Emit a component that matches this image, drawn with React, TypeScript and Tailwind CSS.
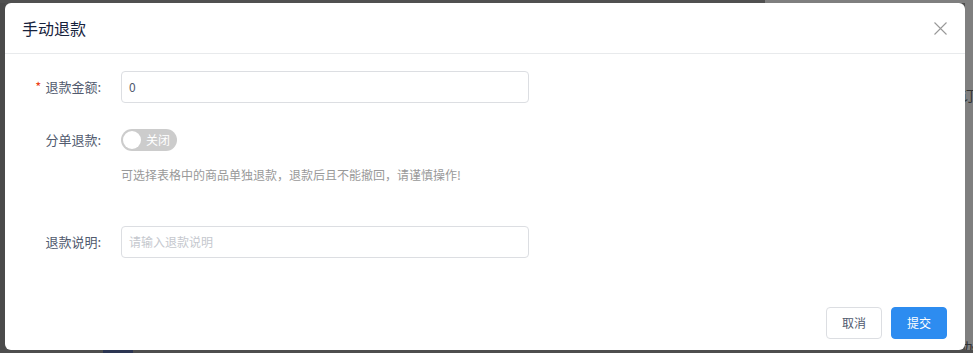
import React from "react";

const font = { fontFamily: '"Noto Sans CJK SC", "Noto Sans", sans-serif' };

export default function App() {
  return (
    <div
      className="w-[973px] h-[353px] overflow-hidden bg-[#4e4e4e] flex flex-col"
      style={font}
    >
      <div className="h-[3px] flex shrink-0">
        <div className="w-[765px] bg-[#505050]" />
        <div className="flex-1 bg-[#7f7f7f]" />
      </div>
      <div className="flex h-[347px] shrink-0">
        <div className="w-[5px] bg-[#4a4a4a]" />
        <div className="w-[960px] bg-white rounded-[6px] flex flex-col">
          {/* header */}
          <div className="h-[51px] border-b border-[#e8eaec] flex items-center justify-between pl-[17px] pr-[18px] shrink-0">
            <span className="text-[16px] text-[#17233d] leading-none">手动退款</span>
            <svg width="13" height="13" viewBox="0 0 13 13" className="mt-[1px]">
              <path d="M0.5 0.5 L12.5 12.5 M12.5 0.5 L0.5 12.5" stroke="#999" strokeWidth="1.1" />
            </svg>
          </div>
          {/* body */}
          <div className="flex-1 flex flex-col">
            <div className="flex items-center mt-[17px]">
              <div className="w-[116px] pr-[20px] text-right text-[13px] text-[#515a6e]">
                <span className="text-[#ed4014] mr-[4px]">*</span>退款金额:
              </div>
              <div className="w-[408px] h-[32px] border border-[#dcdee2] rounded-[4px] px-[7px] flex items-center text-[12px] text-[#515a6e]">
                0
              </div>
            </div>
            <div className="flex items-center mt-[26px] h-[22px]">
              <div className="w-[116px] pr-[20px] text-right text-[13px] text-[#515a6e]">
                分单退款:
              </div>
              <div className="w-[56px] h-[22px] rounded-full bg-[#cccccc] flex items-center pl-[2px]">
                <div className="w-[18px] h-[18px] rounded-full bg-white" />
                <span className="ml-[5px] text-[12px] text-white leading-none">关闭</span>
              </div>
            </div>
            <div className="ml-[116px] mt-[14px] h-[20px] flex items-center text-[12px] text-[#999999]">
              可选择表格中的商品单独退款，退款后且不能撤回，请谨慎操作!
            </div>
            <div className="flex items-center mt-[41px]">
              <div className="w-[116px] pr-[20px] text-right text-[13px] text-[#515a6e]">
                退款说明:
              </div>
              <div className="w-[408px] h-[32px] border border-[#dcdee2] rounded-[4px] px-[7px] flex items-center text-[12px] text-[#c5c8ce]">
                请输入退款说明
              </div>
            </div>
          </div>
          {/* footer */}
          <div className="flex justify-end gap-[9px] pr-[18px] pb-[11px] shrink-0">
            <button className="w-[56px] h-[32px] border border-[#dcdee2] rounded-[4px] bg-white text-[12px] text-[#515a6e]">
              取消
            </button>
            <button className="w-[56px] h-[32px] border border-[#2d8cf0] rounded-[4px] bg-[#2d8cf0] text-[12px] text-white">
              提交
            </button>
          </div>
        </div>
        <div className="w-[8px] bg-[#7f7f7f] flex flex-col overflow-hidden">
          <div className="mt-[83px] text-[14px] leading-[18px] text-[#333] -ml-[4px] whitespace-nowrap">订</div>
          <div className="mt-auto mb-[-6px] text-[14px] leading-[18px] text-[#333] -ml-[4px] whitespace-nowrap">办</div>
        </div>
      </div>
      <div className="h-[3px] flex shrink-0">
        <div className="w-[103px] bg-[#4e4e4e]" />
        <div className="w-[30px] bg-[#2c3552]" />
        <div className="flex-1 bg-[#4e4e4e]" />
      </div>
    </div>
  );
}
